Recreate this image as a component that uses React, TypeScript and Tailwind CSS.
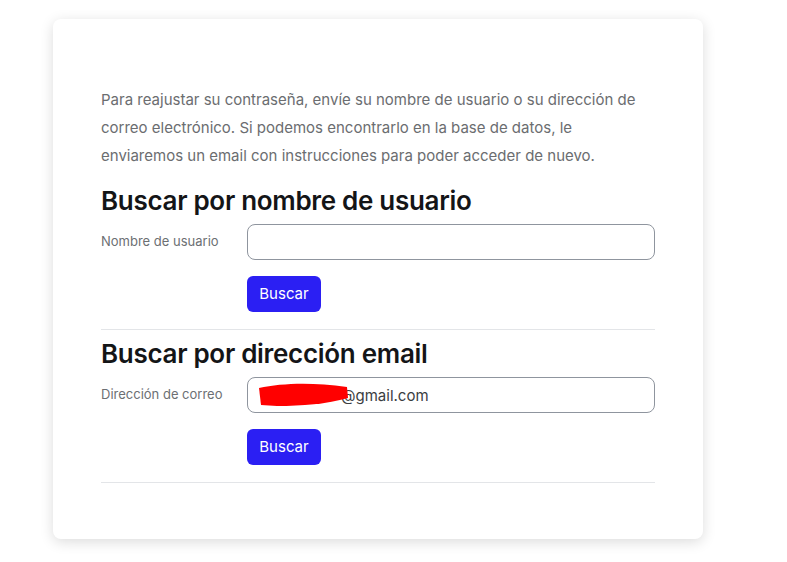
import React from "react"

function SearchRow({ label, value }: { label: string; value?: string }) {
  return (
    <>
      <div className="flex items-start mt-[8px]">
        <label className="w-[146px] shrink-0 pt-[7px] text-[13px] leading-[20px] text-[#6c6f73]">{label}</label>
        <div className="relative flex-1">
          <input
            readOnly
            value={value ?? ""}
            className={`w-full h-[36px] rounded-[8px] border border-[#8f959e] bg-white text-[15px] text-[#3a3d41] outline-none ${value ? "pl-[93px]" : "px-[12px]"}`}
          />
          {value && (
            <svg className="absolute left-[10px] top-[5px]" width="92" height="26" viewBox="0 0 92 26">
              <path d="M2 6 C25 1 55 0 90 5 L91 16 C70 22 45 24 20 24 L4 23 Z" fill="#ff0000" />
            </svg>
          )}
        </div>
      </div>
      <div className="flex mt-[16px]">
        <div className="w-[146px] shrink-0" />
        <button className="h-[36px] w-[74px] rounded-[6px] bg-[#2b1ff3] text-[15px] text-white">Buscar</button>
      </div>
      <div className="mt-[17px] border-t border-[#e3e5e8]" />
    </>
  )
}

export default function App() {
  return (
    <div className="min-h-screen bg-white pt-[19px] pl-[53px]" style={{ fontFamily: "Inter, 'Liberation Sans', sans-serif" }}>
      <div className="w-[650px] h-[520px] rounded-[8px] bg-white px-[48px] pt-[67px] shadow-[0_3px_14px_rgba(0,0,0,0.14)]">
        <p className="text-[15px] leading-[28px] text-[#6b6d70]">
          Para reajustar su contraseña, envíe su nombre de usuario o su dirección de correo electrónico. Si podemos encontrarlo en la base de datos, le enviaremos un email con instrucciones para poder acceder de nuevo.
        </p>
        <h3 className="mt-[15px] text-[26px] leading-[31px] font-semibold text-[#141517] tracking-[-0.3px]">Buscar por nombre de usuario</h3>
        <SearchRow label="Nombre de usuario" />
        <h3 className="mt-[8px] text-[26px] leading-[31px] font-semibold text-[#141517] tracking-[-0.3px]">Buscar por dirección email</h3>
        <SearchRow label="Dirección de correo" value="@gmail.com" />
      </div>
    </div>
  )
}
